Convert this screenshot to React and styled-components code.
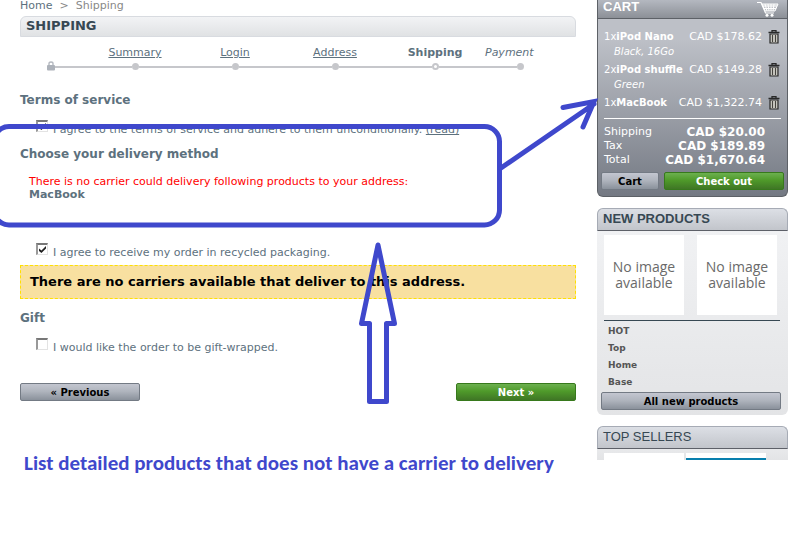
import React from 'react'
import styled, { createGlobalStyle, css } from 'styled-components'

const GlobalStyle = createGlobalStyle`
  * {
    box-sizing: border-box;
  }

  body {
    margin: 0;
    background: #fff;
    color: #5d717e;
    font-family: Verdana, "DejaVu Sans", sans-serif;
    font-size: 11px;
    line-height: 14px;
  }

  h1, h2, h3, p, ul, ol, dl, dd {
    margin: 0;
    padding: 0;
  }

  ul, ol {
    list-style: none;
  }

  a {
    color: inherit;
  }
`;

const Page = styled.div`
  position: relative;
  display: grid;
  grid-template-columns: minmax(0, 1fr) 191px;
  column-gap: 21px;
  align-items: start;
  padding: 0 3px 0 20px;
  overflow: hidden;
`;

const Breadcrumb = styled.nav`
  display: flex;
  gap: 7px;
  height: 16px;
  line-height: 12px;
  color: #888;

  a {
    color: #5d717e;
    text-decoration: none;
  }
`;

const PageTitle = styled.h1`
  height: 21px;
  padding-left: 5px;
  border: 1px solid #d8dbe0;
  border-radius: 6px 6px 0 0;
  background: linear-gradient(#f2f3f5, #e0e2e4);
  color: #374853;
  font-size: 13px;
  line-height: 18px;
`;

const Steps = styled.ol`
  display: flex;
  align-items: flex-end;
  height: 34px;
  margin-bottom: 20px;
  padding: 0 21px 0 27px;
`;

const Step = styled.li`
  display: flex;
  flex: 100 1 0;
  flex-direction: column;
  align-items: center;
  gap: 3px;
  font-weight: ${props => (props.$current ? 'bold' : 'normal')};

  &:last-child {
    flex: 70 1 0;
    align-items: flex-start;
    font-style: italic;
  }
`;

const StepStart = styled.li`
  display: flex;
  align-items: center;
  flex: 0 0 38px;
  height: 8px;

  svg {
    flex: none;
    margin-bottom: 2px;
  }
`;

const Rail = styled.span`
  display: flex;
  align-items: center;
  width: 100%;
  height: 8px;
`;

const Line = styled.span`
  flex: 1;
  height: 2px;
  background: ${props => (props.$hidden ? 'transparent' : '#c6c7cb')};
`;

const Dot = styled.span`
  align-self: flex-start;
  width: 7px;
  height: 7px;
  border: 2px solid #c6c7cb;
  border-radius: 50%;
  background: ${props => (props.$open ? '#fff' : '#c6c7cb')};
`;

const SectionTitle = styled.h3`
  font-size: 12px;
  line-height: 18px;
`;

const CheckRow = styled.div`
  display: flex;
  gap: 5px;
  padding-left: 16px;

  ${SectionTitle} + & {
    margin-top: 11px;
  }

  & + ${SectionTitle} {
    margin-top: 8px;
  }

  label {
    padding-top: 3px;
  }
`;

const Checkbox = styled.input`
  appearance: none;
  flex: none;
  width: 12px;
  height: 12px;
  margin: 0;
  border: 1px solid #e3e3e3;
  border-top: 2px solid #777;
  border-left: 2px solid #999;
  background: #fff;

  &:checked::after {
    content: "";
    display: block;
    width: 7px;
    height: 7px;
    margin: 1px;
    background: #222;
    clip-path: polygon(0 35%, 35% 65%, 100% 0, 100% 35%, 35% 100%, 0 70%);
  }
`;

const CarrierError = styled.div`
  margin: 12px 0 42px;
  padding-left: 9px;
  line-height: 13px;

  p {
    color: #f00;
  }
`;

const Warning = styled.p`
  margin: 5px 0 10px;
  padding: 8px 9px;
  border: 1px dashed #ffe000;
  background: #f8e0a0;
  color: #000;
  font-size: 13px;
  font-weight: bold;
  line-height: 16px;
`;

const Button = styled.button`
  width: ${props => props.$width};
  height: 18px;
  padding: 0;
  border: 1px solid #737a84;
  border-radius: 2px;
  background: linear-gradient(#c3c6d0, #b0b5be 45%, #8a919b);
  color: #000;
  font: bold 10px/15px Verdana, "DejaVu Sans", sans-serif;

  ${props => props.$green && css`
    border-color: #37791c;
    background: linear-gradient(#6cb04f, #4f9a2a 45%, #3f7625);
    color: #fff;
  `}
`;

const Actions = styled.div`
  display: flex;
  justify-content: space-between;
  margin-top: 28px;
`;

const Caption = styled.p`
  margin-top: 49px;
  padding-left: 4px;
  color: #3f48cc;
  font: bold 21px/26px Carlito, Lato, sans-serif;
  white-space: nowrap;
`;

const Sidebar = styled.aside`
  display: flex;
  flex-direction: column;
  gap: 11px;
`;

const Block = styled.section`
  border-radius: ${props => (props.$open ? '6px 6px 0 0' : '6px')};
  background: linear-gradient(#f2f3f5, #e3e4e6);
`;

const BlockTitle = styled.h2`
  height: 23px;
  padding-left: 5px;
  border: 1px solid #a6abb5;
  border-bottom-color: #5d6068;
  border-radius: 6px 6px 0 0;
  background: linear-gradient(#dcdfe5, #c2c5cb);
  color: #374853;
  font: ${props => (props.$light ? 'normal' : 'bold')} 13px/19px "Liberation Sans", Arial, sans-serif;
`;

const CartBlock = styled.section`
  height: 197px;
  border: 1px solid #5d6167;
  border-top: 0;
  border-radius: 0 0 6px 6px;
  background: linear-gradient(#bdc0c7 20%, #747983);
  color: #fff;
`;

const CartTitle = styled.h2`
  display: flex;
  justify-content: space-between;
  height: 19px;
  padding: 0 8px 0 5px;
  border-bottom: 1px solid #5d6167;
  background: linear-gradient(#b4b8c0, #8c9097);
  font: bold 13px/13px "Liberation Sans", Arial, sans-serif;
`;

const CartItems = styled.ul`
  height: 100px;
  margin: 0 6px;
  padding-top: 10px;
  border-bottom: 1px solid #fff;
`;

const CartItem = styled.li`
  display: grid;
  grid-template-columns: 1fr auto 12px;
  column-gap: 6px;
  align-items: center;
  margin-bottom: 3px;
  padding-right: 1px;
  line-height: 15px;
  white-space: nowrap;

  em {
    grid-column: 1 / -1;
    padding-left: 10px;
    font-size: 10px;
  }
`;

const ItemName = styled.span`
  font-size: 10px;
`;

const RemoveButton = styled.button`
  display: flex;
  padding: 0;
  border: 0;
  background: none;
`;

const Totals = styled.dl`
  display: grid;
  grid-template-columns: auto 1fr;
  margin: 6px 22px 0 6px;

  dd {
    font-size: 12px;
    font-weight: bold;
    text-align: right;
  }
`;

const CartActions = styled.div`
  display: flex;
  gap: 5px;
  margin: 5px 3px 0;
`;

const BlockBody = styled.div`
  padding: 4px 7px 5px 4px;
`;

const Thumbs = styled.div`
  display: flex;
  gap: 13px;
  margin: 0 0 5px 3px;
`;

const Thumb = styled.a`
  display: flex;
  align-items: center;
  width: 80px;
  height: 80px;
  background: #fff;
  color: #6a6a6a;
  font: 14px/16px "Open Sans", sans-serif;
  text-align: center;
  text-decoration: none;
`;

const ProductLinks = styled.ul`
  margin: 0 1px 1px 3px;
  padding: 2px 4px 0;
  border-top: 1px solid #374853;
  color: #555;
  font-size: 9px;
  font-weight: bold;
  line-height: 17px;

  a {
    text-decoration: none;
  }
`;

const SellerThumbs = styled.div`
  display: flex;
  gap: 2px;
  height: 11px;
  padding: 4px 0 0 7px;
`;

const SellerThumb = styled.span`
  width: 80px;
  border-bottom: ${props => (props.$blue ? '2px solid #087fae' : '0')};
  background: #fff;
`;

const Annotation = styled.svg`
  position: absolute;
  top: 0;
  left: 0;
  pointer-events: none;
`;

const LockIcon = () => (
  <svg width="8" height="10" viewBox="0 0 8 10">
    <path d="M2 5V2.5Q2 1 4 1T6 2.5V5" fill="none" stroke="#b5b9c0" strokeWidth="1.4" />
    <rect y="4" width="8" height="5.5" rx="1" fill="#adb2ba" />
  </svg>
)

const TrashIcon = () => (
  <svg width="12" height="14" viewBox="0 0 12 14">
    <path d="M4 2V.6h4V2M.5 2.5h11" fill="none" stroke="#292929" strokeWidth="1.3" />
    <path d="M2 4h8v9H2z" fill="#c4c3bc" stroke="#292929" strokeWidth="1.2" />
    <path d="M4.500 5v7M7.500 5v7" stroke="#45433e" />
  </svg>
)

const CartIcon = () => (
  <svg width="22" height="17" viewBox="0 0 22 17">
    <path d="M0 2.5h4L8.5 13H17" fill="none" stroke="#fff" strokeWidth="1.2" />
    <path d="M5 4h16l-3 7H8z" fill="#fff" fillOpacity=".35" stroke="#fff" />
    <path d="M5 6h15M6 8.5h13M8 4l2 7M11 4l1 7M14 4v7M17 4l-1 7" stroke="#fff" />
    <circle cx="10" cy="15.3" r="1.5" fill="#fff" />
    <circle cx="15" cy="15.3" r="1.5" fill="#fff" />
  </svg>
)

const steps = [
  { label: 'Summary', link: true },
  { label: 'Login', link: true },
  { label: 'Address', link: true },
  { label: 'Shipping', current: true },
  { label: 'Payment', last: true },
]

const cartItems = [
  { qty: 1, name: 'iPod Nano', price: 'CAD $178.62', options: 'Black, 16Go' },
  { qty: 2, name: 'iPod shuffle', price: 'CAD $149.28', options: 'Green' },
  { qty: 1, name: 'MacBook', price: 'CAD $1,322.74' },
]

const Cart = () => (
  <CartBlock>
    <CartTitle>
      CART
      <CartIcon />
    </CartTitle>
    <CartItems>
      {cartItems.map(item => (
        <CartItem key={item.name}>
          <ItemName>{item.qty}x<b>{item.name}</b></ItemName>
          <span>{item.price}</span>
          <RemoveButton aria-label={`Remove ${item.name}`}>
            <TrashIcon />
          </RemoveButton>
          {item.options && <em>{item.options}</em>}
        </CartItem>
      ))}
    </CartItems>
    <Totals>
      <dt>Shipping</dt>
      <dd>CAD $20.00</dd>
      <dt>Tax</dt>
      <dd>CAD $189.89</dd>
      <dt>Total</dt>
      <dd>CAD $1,670.64</dd>
    </Totals>
    <CartActions>
      <Button $width="58px">Cart</Button>
      <Button $green $width="120px">Check out</Button>
    </CartActions>
  </CartBlock>
)

const App = () => (
  <>
    <GlobalStyle />
    <Page>
      <main>
        <Breadcrumb aria-label="breadcrumb">
          <a href="#home">Home</a>
          <span>&gt;</span>
          <span>Shipping</span>
        </Breadcrumb>
        <PageTitle>SHIPPING</PageTitle>
        <Steps>
          <StepStart>
            <LockIcon />
            <Line />
          </StepStart>
          {steps.map(step => (
            <Step key={step.label} $current={step.current}>
              {step.link ? <a href="#step">{step.label}</a> : <span>{step.label}</span>}
              <Rail>
                <Line />
                <Dot $open={step.current} />
                <Line $hidden={step.last} />
              </Rail>
            </Step>
          ))}
        </Steps>

        <SectionTitle>Terms of service</SectionTitle>
        <CheckRow>
          <Checkbox type="checkbox" id="cgv" defaultChecked />
          <label htmlFor="cgv">
            I agree to the terms of service and adhere to them unconditionally. <a href="#terms">(read)</a>
          </label>
        </CheckRow>

        <SectionTitle>Choose your delivery method</SectionTitle>
        <CarrierError>
          <p>There is no carrier could delivery following products to your address:</p>
          <b>MacBook</b>
        </CarrierError>
        <CheckRow>
          <Checkbox type="checkbox" id="recyclable" defaultChecked />
          <label htmlFor="recyclable">I agree to receive my order in recycled packaging.</label>
        </CheckRow>
        <Warning>There are no carriers available that deliver to this address.</Warning>

        <SectionTitle>Gift</SectionTitle>
        <CheckRow>
          <Checkbox type="checkbox" id="gift" />
          <label htmlFor="gift">I would like the order to be gift-wrapped.</label>
        </CheckRow>

        <Actions>
          <Button $width="120px">« Previous</Button>
          <Button $green $width="120px">Next »</Button>
        </Actions>
        <Caption>List detailed products that does not have a carrier to delivery</Caption>
      </main>

      <Sidebar>
        <Cart />
        <Block>
          <BlockTitle>NEW PRODUCTS</BlockTitle>
          <BlockBody>
            <Thumbs>
              <Thumb href="#product">No image available</Thumb>
              <Thumb href="#product">No image available</Thumb>
            </Thumbs>
            <ProductLinks>
              <li><a href="#hot">HOT</a></li>
              <li><a href="#top">Top</a></li>
              <li><a href="#home">Home</a></li>
              <li><a href="#base">Base</a></li>
            </ProductLinks>
            <Button $width="100%">All new products</Button>
          </BlockBody>
        </Block>
        <Block $open>
          <BlockTitle $light>TOP SELLERS</BlockTitle>
          <SellerThumbs>
            <SellerThumb />
            <SellerThumb $blue />
          </SellerThumbs>
        </Block>
      </Sidebar>

      <Annotation width="620" height="420" fill="none" stroke="#3f48cc" strokeWidth="5">
        <rect x="-6" y="126.5" width="505.5" height="98.5" rx="15" />
        <path d="M501 168L594 104M563 107.5L594 101.5L583 127" strokeLinecap="round" />
        <path d="M378 245L361.5 323.5H369.5V401.5H386.5V323.5H394.5Z" strokeLinejoin="round" />
      </Annotation>
    </Page>
  </>
)

export default App
